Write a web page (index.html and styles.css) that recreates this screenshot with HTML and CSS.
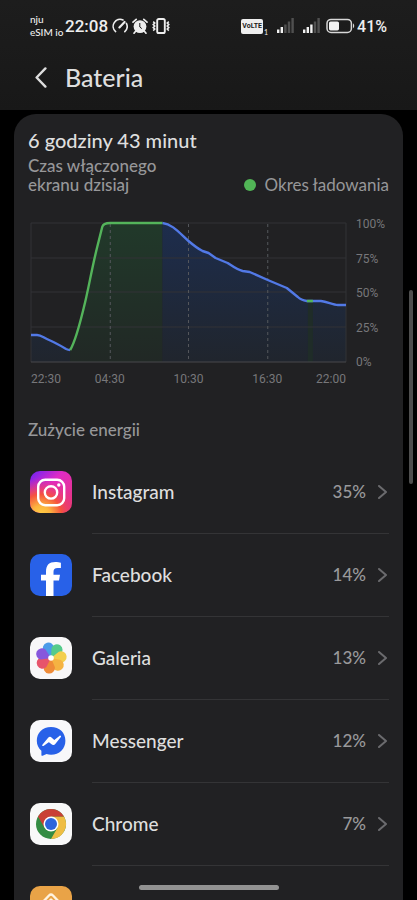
FILE: index.html
```html
<!DOCTYPE html>
<html lang="pl">
<head>
  <meta charset="UTF-8">
  <meta name="viewport" content="width=device-width, initial-scale=1.0">
  <title>Bateria</title>
  <link rel="stylesheet" href="styles.css">
</head>
<body>
  <div class="screen">
    <header class="top">
      <div class="status">
        <div class="carrier"><span>nju</span><span>eSIM io</span></div>
        <span class="clock">22:08</span>
        <svg class="status-icon" width="16" height="16" viewBox="0 0 16 16" fill="none" stroke="#eee" stroke-width="1.6" stroke-linecap="round">
          <path d="M3.6 13.6A7 7 0 0 1 11 1.9M14.4 5.4a7 7 0 0 1-1.6 8.2"/>
          <path d="M7.4 9.4L12.6 4" stroke-width="2.2"/>
        </svg>
        <svg class="status-icon" width="16" height="16" viewBox="0 0 16 16">
          <circle cx="8" cy="8.6" r="6.4" fill="#eee"/>
          <path d="M1 4.2L4.2 1.3M15 4.2l-3.2-2.9M3.6 13.2l-1.6 2M12.4 13.2l1.6 2" stroke="#eee" stroke-width="1.7" stroke-linecap="round"/>
          <path d="M7.8 5v4l2 1.6" fill="none" stroke="#1b1b1b" stroke-width="1"/>
        </svg>
        <svg class="status-icon" width="18" height="16" viewBox="0 0 18 16" fill="none" stroke="#eee">
          <rect x="5.2" y="1" width="7.6" height="14" rx="1.6" stroke-width="1.9"/>
          <path d="M1.2 3.600l1.6 1.5-1.6 1.5 1.6 1.5-1.6 1.5 1.6 1.5-1.6 1.5M16.8 3.600l-1.6 1.5 1.6 1.5-1.6 1.5 1.6 1.5-1.6 1.5 1.6 1.5" stroke-width="1.500"/>
        </svg>
        <div class="status-right">
          <span class="volte">VoLTE</span><span class="sim">1</span>
          <svg class="signal" width="17" height="16" viewBox="0 0 17 16">
            <path d="M0 11.5h2.4V15H0zM3.6 9h2.4v6H3.6z" fill="#f2f2f2"/>
            <path d="M7.2 6.5h2.4V15H7.2zM10.8 3.5h2.4V15h-2.4zM14.4 0h2.4v15h-2.4z" fill="#505050"/>
          </svg>
          <svg class="signal" width="17" height="16" viewBox="0 0 17 16">
            <path d="M0 11.5h2.4V15H0zM3.6 9h2.4v6H3.6zM7.2 6.5h2.4V15H7.2z" fill="#f2f2f2"/>
            <path d="M10.8 3.5h2.4V15h-2.4zM14.4 0h2.4v15h-2.4z" fill="#505050"/>
          </svg>
          <svg width="29" height="16" viewBox="0 0 29 16">
            <rect x="1" y="1.4" width="24.4" height="13" rx="4" fill="none" stroke="#d8d8d8" stroke-width="1.5"/>
            <rect x="3" y="3.4" width="10" height="9" rx="1.6" fill="#f2f2f2"/>
            <path d="M27 5.6c1.6.6 1.6 4 0 4.6z" fill="#d8d8d8"/>
          </svg>
          <span class="level">41%</span>
        </div>
      </div>
      <div class="title-bar">
        <button class="back" type="button" aria-label="Wstecz">
          <svg width="12" height="21" viewBox="0 0 12 21" fill="none" stroke="#ddd" stroke-width="2.4" stroke-linecap="round" stroke-linejoin="round"><path d="M10.4 1.4L1.6 10.5l8.8 9.1"/></svg>
        </button>
        <h1>Bateria</h1>
      </div>
    </header>

    <main class="card">
      <h2>6 godziny 43 minut</h2>
      <div class="summary">
        <p>Czas włączonego ekranu dzisiaj</p>
        <span class="legend">Okres ładowania</span>
      </div>

      <div class="chart">
        <svg class="plot" viewBox="0 0 314 139" preserveAspectRatio="none">
          <defs>
            <linearGradient id="blueFill" x1="0" y1="0" x2="0" y2="139" gradientUnits="userSpaceOnUse">
              <stop offset="0" stop-color="#1d2d4d"/><stop offset="1" stop-color="#20252d"/>
            </linearGradient>
            <linearGradient id="greenFill" x1="0" y1="0" x2="0" y2="139" gradientUnits="userSpaceOnUse">
              <stop offset="0" stop-color="#21392a"/><stop offset="1" stop-color="#212825"/>
            </linearGradient>
          </defs>
          <path fill="url(#blueFill)" d="M0 112H8L18 117L26 121L35 126L39 127V139H0z"/>
          <path fill="url(#greenFill)" d="M39 127L46 111L54 79L61 47L66 24L72 2L79 0H131V139H39z"/>
          <path fill="url(#blueFill)" d="M131 0L138 2L145 6L157 18L163 23L171 28L177 30L184 35L196 40L204 45L211 48L218 49L236 57L255 65L269 76L275 78H289L306 82H314V139H131z"/>
          <path fill="#1f2c28" d="M276 78h5v61h-5z"/>
          <path class="grid" d="M0 0H314V139M0 0V139M0 35H314M0 69H314M0 104H314"/>
          <path class="base" d="M0 139H314"/>
          <path class="dash" d="M79 1V139M157 1V139M236 1V139"/>
          <path class="line blue" d="M0 112H6C10 112 13 115 18 117S30 123 35 126Q37 127 39 127"/>
          <path class="line blue" d="M131 0C141 1 148 10 157 18C164 24 167 26 171 28L177 30L184 35L196 40C202 44 206 47 211 48L218 49L236 57L255 65L266 74Q269 77 275 78H289C296 79 301 82 306 82H314"/>
          <path class="line green" d="M39 127C44 119 50 96 54 79S61 44 66 24L71 4Q72 0 79 0H131M275 78H281"/>
        </svg>
        <div class="y-axis"><span>100%</span><span>75%</span><span>50%</span><span>25%</span><span>0%</span></div>
        <div class="x-axis"><span>22:30</span><span>04:30</span><span>10:30</span><span>16:30</span><span>22:00</span></div>
      </div>

      <h3>Zużycie energii</h3>
      <ul class="apps">
        <li><a href="#instagram">
          <svg class="app-icon" viewBox="0 0 42 42">
            <defs>
              <linearGradient id="igBase" x1="0" y1="0" x2="1" y2="1"><stop offset="0" stop-color="#6a22f5"/><stop offset=".4" stop-color="#e02bc5"/><stop offset="1" stop-color="#e8386f"/></linearGradient>
              <radialGradient id="igGlow" cx=".26" cy="1.05" r=".9"><stop offset="0" stop-color="#ffd044"/><stop offset=".25" stop-color="#fcb53f"/><stop offset=".55" stop-color="#f5523f"/><stop offset="1" stop-color="#e62e8e" stop-opacity="0"/></radialGradient>
            </defs>
            <rect width="42" height="42" rx="10" fill="url(#igBase)"/>
            <rect width="42" height="42" rx="10" fill="url(#igGlow)"/>
            <g fill="none" stroke="#fff" stroke-width="2.4"><rect x="8.2" y="8.8" width="26" height="25.4" rx="7"/><circle cx="21" cy="21.4" r="6.2"/></g>
            <circle cx="28.8" cy="14" r="1.7" fill="#fff"/>
          </svg>
          <span class="name">Instagram</span><span class="percent">35%</span>
          <svg class="chevron" viewBox="0 0 9 14"><path d="M1 1l7 6-7 6"/></svg>
        </a></li>
        <li><a href="#facebook">
          <svg class="app-icon" viewBox="0 0 42 42">
            <rect width="42" height="42" rx="10" fill="#2861e8"/>
            <path d="M16 42V26.4h-5v-5.6h5v-3C16 11 19.2 8 25.3 8c2 0 4.3.3 5.6.7v5.4h-3.2c-3.1 0-4.2 1.2-4.2 4v2.7H30l-1 5.6h-5.5V42z" fill="#fff"/>
          </svg>
          <span class="name">Facebook</span><span class="percent">14%</span>
          <svg class="chevron" viewBox="0 0 9 14"><path d="M1 1l7 6-7 6"/></svg>
        </a></li>
        <li><a href="#galeria">
          <svg class="app-icon" viewBox="0 0 42 42">
            <rect width="42" height="42" rx="10" fill="#f8f7f8"/>
            <g transform="translate(21 21)">
              <path d="M0 0L-5.5-8.5A5.7 5.7 0 1 1 5.5-8.5z" fill="#4b9be8" transform="rotate(-15)"/>
              <path d="M0 0L-5.5-8.5A5.7 5.7 0 1 1 5.5-8.5z" fill="#55cb8b" transform="rotate(36)"/>
              <path d="M0 0L-5.5-8.5A5.7 5.7 0 1 1 5.5-8.5z" fill="#f3cf4d" transform="rotate(84)"/>
              <path d="M0 0L-5.5-8.5A5.7 5.7 0 1 1 5.5-8.5z" fill="#f5b342" transform="rotate(135)"/>
              <path d="M0 0L-5.5-8.5A5.7 5.7 0 1 1 5.5-8.5z" fill="#ef8b38" transform="rotate(190)"/>
              <path d="M0 0L-5.5-8.5A5.7 5.7 0 1 1 5.5-8.5z" fill="#e7546b" transform="rotate(240)"/>
              <path d="M0 0L-5.5-8.5A5.7 5.7 0 1 1 5.5-8.5z" fill="#8757dc" transform="rotate(294)"/>
              <circle r="2.8" fill="#fff"/>
            </g>
          </svg>
          <span class="name">Galeria</span><span class="percent">13%</span>
          <svg class="chevron" viewBox="0 0 9 14"><path d="M1 1l7 6-7 6"/></svg>
        </a></li>
        <li><a href="#messenger">
          <svg class="app-icon" viewBox="0 0 42 42">
            <rect width="42" height="42" rx="10" fill="#f8f8fa"/>
            <path d="M21 7C12.5 7 6.8 13 6.8 20.7c0 4 1.7 7.5 4.600 10v4.2c0 .8.6 1.1 1.3.8l3.8-1.6c1.4.4 2.9.6 4.5.6 8.5 0 14.4-6 14.4-14S29.500 7 21 7z" fill="#2861e8"/>
            <path d="M13 25.2l5.8-6.8c.7-.8 1.6-.8 2.4-.1l3 2.8 6-4.7-5.600 7c-.7.9-1.7 1-2.5.3l-3.2-2.7z" fill="#fff" stroke="#fff" stroke-width="1.7" stroke-linejoin="round"/>
          </svg>
          <span class="name">Messenger</span><span class="percent">12%</span>
          <svg class="chevron" viewBox="0 0 9 14"><path d="M1 1l7 6-7 6"/></svg>
        </a></li>
        <li><a href="#chrome">
          <svg class="app-icon" viewBox="0 0 42 42">
            <rect width="42" height="42" rx="10" fill="#f8f8f8"/>
            <circle cx="21" cy="21" r="15" fill="#348c43"/>
            <path d="M21 13.5H34A15 15 0 0 1 21 36L27.5 24.75z" fill="#efbd43"/>
            <path d="M8 13.5A15 15 0 0 1 34 13.5H21L14.5 24.75z" fill="#c94036"/>
            <circle cx="21" cy="21" r="7.5" fill="#fff"/>
            <circle cx="21" cy="21" r="6" fill="#2d65dc"/>
          </svg>
          <span class="name">Chrome</span><span class="percent">7%</span>
          <svg class="chevron" viewBox="0 0 9 14"><path d="M1 1l7 6-7 6"/></svg>
        </a></li>
        <li><a href="#home" aria-label="Ekran główny">
          <svg class="app-icon" viewBox="0 0 42 42">
            <rect width="42" height="42" rx="10" fill="#e9a347"/>
            <path d="M10 19L19 9.500q2-2 4 0L32 19M15.500 19l5.500-5.500 5.500 5.500" fill="none" stroke="#fff3df" stroke-width="2.400" stroke-linejoin="round"/>
          </svg>
        </a></li>
      </ul>
    </main>
    <div class="scroll-thumb"></div>
    <div class="gesture-bar"></div>
  </div>
</body>
</html>
```

FILE: styles.css
```css
* {
  box-sizing: border-box;
}

body {
  margin: 0;
  background: #000;
  color: #dedede;
  font-family: Lato, "Noto Sans", sans-serif;
}

h1, h2, h3, p, ul {
  margin: 0;
  padding: 0;
  font-weight: 500;
}

.screen {
  position: relative;
  height: 100vh;
  overflow: hidden;
}

.top {
  height: 110px;
  padding: 13px 30px 0;
  background: linear-gradient(#1d1d1d, #181818);
}

.status {
  display: flex;
  align-items: center;
  height: 26px;
  color: #eee;
}

.carrier {
  display: flex;
  flex-direction: column;
  width: 35px;
  font-size: 10px;
  font-weight: 500;
  line-height: 13px;
  white-space: nowrap;
}

.clock, .level {
  font-family: Roboto, sans-serif;
  font-size: 17px;
  font-weight: 500;
}

.level {
  margin-left: 2px;
  font-size: 16px;
}

.status-icon {
  margin-left: 4px;
}

.status-right {
  display: flex;
  align-items: center;
  margin-left: auto;
}

.volte {
  padding: 0 1px;
  border-radius: 2px;
  background: #eee;
  color: #1b1b1b;
  font: 700 7px/15px Roboto, sans-serif;
}

.sim {
  align-self: flex-end;
  margin-left: 1px;
  font-size: 7px;
}

.signal {
  margin-right: 6px;
}

.sim + .signal {
  margin: 0 9px;
}

.title-bar {
  display: flex;
  align-items: center;
  gap: 18px;
  height: 76px;
  padding-left: 5px;
}

.back {
  display: flex;
  padding: 0;
  border: 0;
  background: none;
  cursor: pointer;
}

h1 {
  font-size: 25px;
  line-height: 30px;
}

.card {
  margin: 4px 14px 0;
  padding: 14px;
  border-radius: 22px;
  background: #212123;
}

h2 {
  font-size: 20px;
  line-height: 24px;
}

.summary {
  display: flex;
  justify-content: space-between;
  align-items: flex-end;
  margin-top: 4px;
  color: #979799;
  font-size: 17px;
  line-height: 19px;
}

.summary p {
  width: 150px;
}

.legend {
  display: flex;
  align-items: center;
  gap: 9px;
}

.legend::before {
  content: "";
  width: 12px;
  height: 12px;
  border-radius: 50%;
  background: #51b556;
}

.chart {
  display: grid;
  grid-template-columns: 1fr 33px;
  column-gap: 10px;
  margin: 29px 0 0 3px;
  color: #77777a;
  font-family: Roboto, sans-serif;
  font-size: 12px;
}

.plot {
  width: 100%;
  height: 139px;
  overflow: visible;
}

.plot path {
  vector-effect: non-scaling-stroke;
}

.grid, .base, .dash {
  fill: none;
  stroke: #323336;
}

.base {
  stroke: #48494c;
}

.dash {
  stroke: #55585d;
  stroke-dasharray: 3 3;
}

.line {
  fill: none;
  stroke-width: 2.4;
  stroke-linejoin: round;
}

.blue {
  stroke: #5279e6;
}

.green {
  stroke: #54b45b;
}

.y-axis {
  display: flex;
  flex-direction: column;
  justify-content: space-between;
  margin: -6px 0 -8px;
  line-height: 15px;
}

.x-axis {
  display: grid;
  grid-template-columns: 1fr 2fr 2fr 2fr 1fr;
  margin-top: 9px;
  line-height: 16px;
  text-align: center;
}

.x-axis span:first-child {
  justify-self: start;
}

.x-axis span:last-child {
  justify-self: end;
}

h3 {
  margin-top: 31px;
  color: #979799;
  font-size: 17px;
  line-height: 24px;
}

.apps {
  margin-top: 8px;
  list-style: none;
}

.apps a {
  display: flex;
  align-items: center;
  height: 83px;
  padding: 0 2px;
  color: inherit;
  text-decoration: none;
}

.apps li {
  position: relative;
}

/* divider starts at the app name, not at the icon */
.apps li + li::before {
  content: "";
  position: absolute;
  top: 0;
  right: 0;
  left: 64px;
  height: 1px;
  background: #343436;
}

.app-icon {
  width: 42px;
  height: 42px;
  margin-right: 20px;
}

.name {
  font-size: 19px;
  line-height: 22px;
}

.percent {
  margin-left: auto;
  color: #99999b;
  font-size: 17px;
  line-height: 22px;
}

.chevron {
  width: 9px;
  height: 14px;
  margin-left: 12px;
  fill: none;
  stroke: #6b6b6e;
  stroke-width: 2;
  stroke-linecap: round;
  stroke-linejoin: round;
}

.scroll-thumb {
  position: absolute;
  top: 290px;
  right: 4px;
  width: 4px;
  height: 194px;
  border-radius: 2px;
  background: #4e4e4e;
}

.gesture-bar {
  position: absolute;
  bottom: 10px;
  left: 50%;
  width: 140px;
  height: 5px;
  margin-left: -70px;
  border-radius: 3px;
  background: #929292;
}
```
